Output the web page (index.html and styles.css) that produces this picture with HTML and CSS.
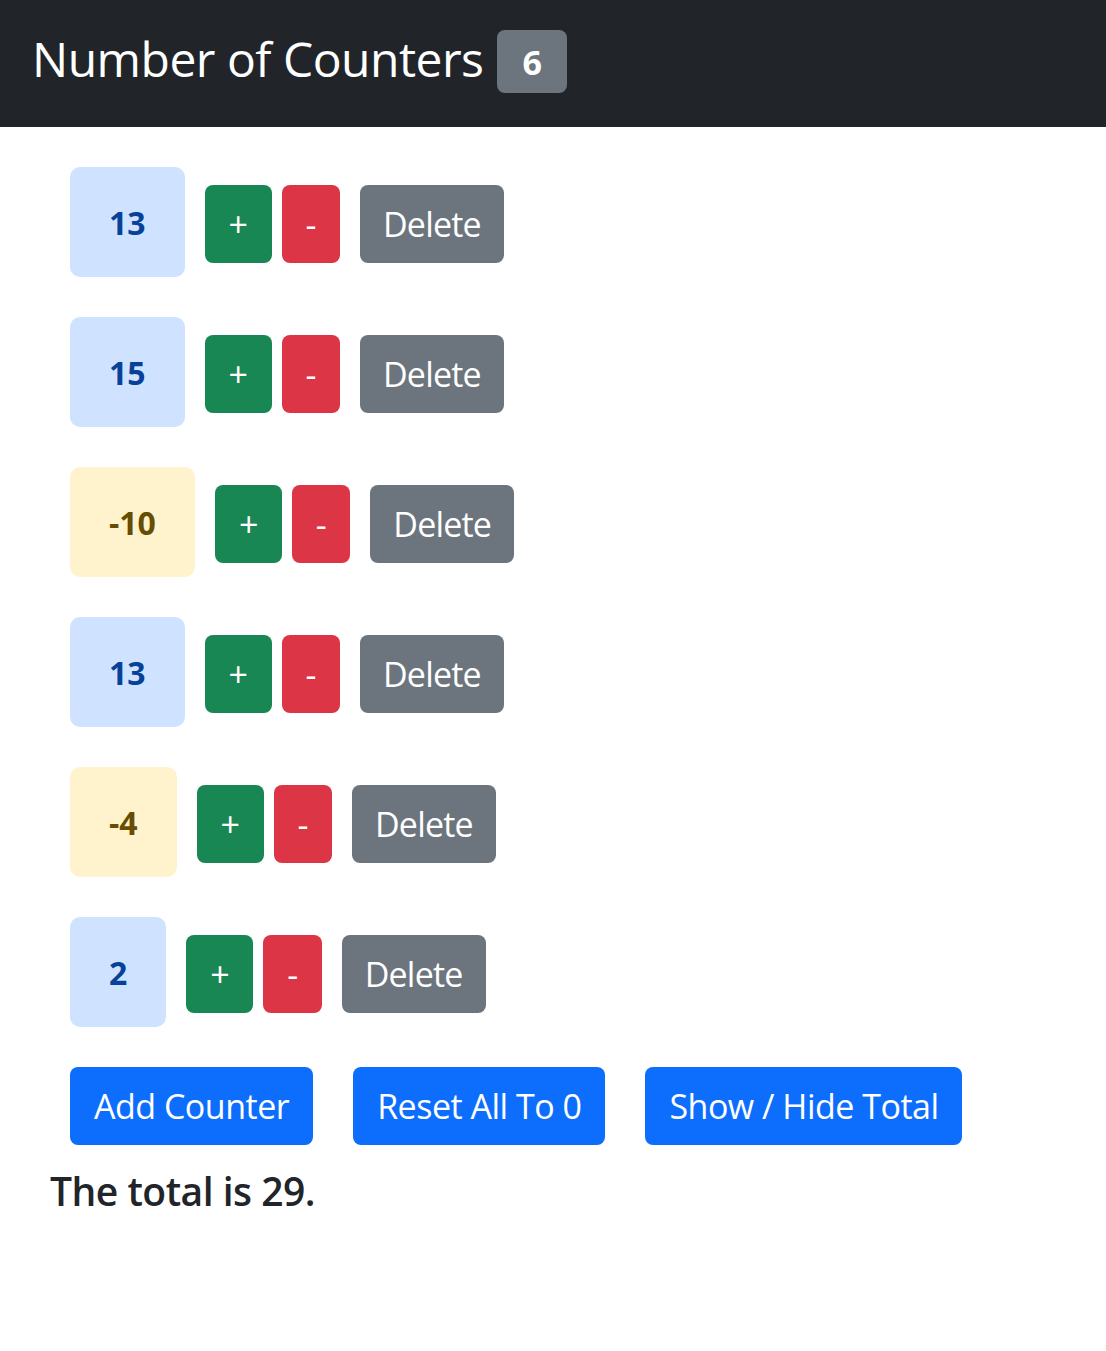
FILE: index.html
```html
<!DOCTYPE html>
<html lang="en">
<head>
<meta charset="utf-8">
<title>Counters</title>
<link rel="stylesheet" href="styles.css">
</head>
<body>
<nav class="navbar">
  <h1 class="brand">Number of Counters</h1>
  <span class="count-badge">6</span>
</nav>
<main class="content">
  <div class="counter">
    <span class="value value-pos">13</span>
    <button class="btn btn-inc">+</button>
    <button class="btn btn-dec">-</button>
    <button class="btn btn-del">Delete</button>
  </div>
  <div class="counter">
    <span class="value value-pos">15</span>
    <button class="btn btn-inc">+</button>
    <button class="btn btn-dec">-</button>
    <button class="btn btn-del">Delete</button>
  </div>
  <div class="counter">
    <span class="value value-neg">-10</span>
    <button class="btn btn-inc">+</button>
    <button class="btn btn-dec">-</button>
    <button class="btn btn-del">Delete</button>
  </div>
  <div class="counter">
    <span class="value value-pos">13</span>
    <button class="btn btn-inc">+</button>
    <button class="btn btn-dec">-</button>
    <button class="btn btn-del">Delete</button>
  </div>
  <div class="counter">
    <span class="value value-neg">-4</span>
    <button class="btn btn-inc">+</button>
    <button class="btn btn-dec">-</button>
    <button class="btn btn-del">Delete</button>
  </div>
  <div class="counter">
    <span class="value value-pos">2</span>
    <button class="btn btn-inc">+</button>
    <button class="btn btn-dec">-</button>
    <button class="btn btn-del">Delete</button>
  </div>
  <div class="actions">
    <button class="btn btn-primary">Add Counter</button>
    <button class="btn btn-primary">Reset All To 0</button>
    <button class="btn btn-primary">Show / Hide Total</button>
  </div>
  <p class="total">The total is 29.</p>
</main>
</body>
</html>
```

FILE: styles.css
```css
* {
  box-sizing: border-box;
}

body {
  margin: 0;
  background: #ffffff;
  font-family: "Open Sans", "Noto Sans", sans-serif;
  color: #212529;
}

.navbar {
  display: flex;
  align-items: center;
  height: 127px;
  padding-left: 32px;
  background: #212529;
}

.brand {
  margin: 0 0 10px;
  font-size: 48px;
  font-weight: 400;
  letter-spacing: -0.5px;
  line-height: 1.2;
  color: #ffffff;
}

.count-badge {
  display: flex;
  align-items: center;
  justify-content: center;
  height: 63px;
  margin-left: 14px;
  margin-top: -4px;
  padding: 0 25px;
  border-radius: 8px;
  background: #6c757d;
  color: #ffffff;
  font-size: 34px;
  font-weight: 700;
}

.content {
  padding: 40px 0 0 50px;
}

.counter {
  display: flex;
  align-items: center;
  margin: 0 0 40px 20px;
}

.value {
  display: flex;
  align-items: center;
  justify-content: center;
  height: 110px;
  padding: 0 39px;
  border-radius: 10px;
  font-size: 32px;
  font-weight: 700;
}

.value-pos {
  background: #cfe2ff;
  color: #084298;
}

.value-neg {
  background: #fff3cd;
  color: #664d03;
}

.btn {
  display: inline-flex;
  align-items: center;
  justify-content: center;
  height: 78px;
  padding: 0 24px;
  border: 0;
  border-radius: 8px;
  font-family: inherit;
  font-size: 34px;
  font-weight: 400;
  letter-spacing: -0.5px;
  line-height: 1;
  color: #ffffff;
}

.counter .btn {
  margin-top: 4px;
}

.btn-inc {
  margin-left: 20px;
  background: #198754;
}

.btn-dec {
  margin-left: 10px;
  background: #dc3545;
}

.btn-del {
  margin-left: 20px;
  padding: 0 23px;
  letter-spacing: -0.8px;
  background: #6c757d;
}

.actions {
  display: flex;
  gap: 40px;
  margin-left: 20px;
}

.btn-primary {
  background: #0d6efd;
}

.total {
  margin: 23px 0 0;
  font-size: 39px;
  font-weight: 600;
  letter-spacing: -0.5px;
  line-height: 1.2;
}
```
